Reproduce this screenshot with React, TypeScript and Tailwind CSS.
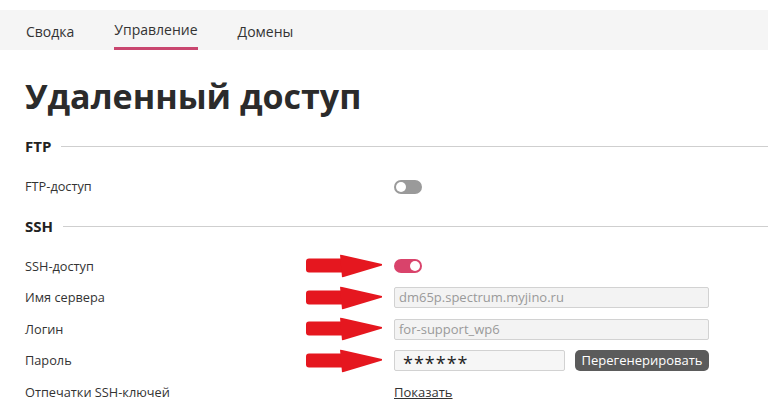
import React from "react"

const font = { fontFamily: '"Open Sans", "Noto Sans", sans-serif' }

function Arrow() {
  return (
    <svg width="76" height="23" viewBox="0 0 76 23" className="absolute left-[281px] top-1/2 -translate-y-1/2">
      <rect x="0" y="4" width="42" height="14" rx="3" fill="#e5171f" />
      <path d="M34 0 L76 9.5 L76 11 L36 23 Z" fill="#e5171f" />
    </svg>
  )
}

function Toggle({ on }: { on?: boolean }) {
  return (
    <div
      className={`w-[28px] h-[14px] rounded-full flex items-center px-[2px] ${
        on ? "bg-[#d9436b] justify-end" : "bg-[#9a9a9a] justify-start"
      }`}
    >
      <div className="w-[10px] h-[10px] rounded-full bg-white" />
    </div>
  )
}

function Row({ label, children, arrow }: { label: string; children: React.ReactNode; arrow?: boolean }) {
  return (
    <div className="relative flex items-center h-[31.5px]">
      <div className="w-[369px] shrink-0 text-[12.75px] text-[#333]">{label}</div>
      {arrow && <Arrow />}
      <div className="flex items-center">{children}</div>
    </div>
  )
}

function Section({ title }: { title: string }) {
  return (
    <div className="flex items-center gap-[10px] h-[20px]">
      <span className="text-[15px] font-bold text-[#222]">{title}</span>
      <div className="flex-1 h-px bg-[#cfcfcf]" />
    </div>
  )
}

export default function App() {
  return (
    <div className="w-full h-[419px] bg-white overflow-hidden pt-[10px]" style={font}>
      <nav className="h-[40px] bg-[#f5f5f5] flex pl-[26px] gap-[40px] text-[14px] text-[#333]">
        <div className="flex items-center pt-[2px]">Сводка</div>
        <div className="flex items-center pt-[2px] border-b-[3px] border-[#c9466f]">Управление</div>
        <div className="flex items-center pt-[2px]">Домены</div>
      </nav>

      <div className="pl-[25px]">
        <h1 className="mt-[26px] text-[34px] leading-[40px] font-bold text-[#2b2b2b]">Удаленный доступ</h1>

        <div className="mt-[20px]">
          <Section title="FTP" />
        </div>
        <div className="mt-[15px]">
          <Row label="FTP-доступ">
            <Toggle />
          </Row>
        </div>

        <div className="mt-[14px]">
          <Section title="SSH" />
        </div>
        <div className="mt-[14px]">
          <Row label="SSH-доступ" arrow>
            <Toggle on />
          </Row>
          <Row label="Имя сервера" arrow>
            <div className="w-[315px] h-[21px] border border-[#d2d2d2] rounded-[2px] bg-[#f3f3f3] px-[4px] flex items-center text-[13px] text-[#9a9a9a]">
              dm65p.spectrum.myjino.ru
            </div>
          </Row>
          <Row label="Логин" arrow>
            <div className="w-[315px] h-[21px] border border-[#d2d2d2] rounded-[2px] bg-[#f3f3f3] px-[4px] flex items-center text-[13px] text-[#9a9a9a]">
              for-support_wp6
            </div>
          </Row>
          <Row label="Пароль" arrow>
            <div className="w-[171px] h-[21px] border border-[#d2d2d2] rounded-[2px] bg-[#f6f6f6] px-[8px] flex items-center text-[18px] text-[#222] tracking-[1px] pt-[6px]">
              ******
            </div>
            <button className="ml-[10px] w-[134px] h-[21px] rounded-[5px] bg-[#5b5b5b] text-white text-[13px] flex items-center justify-center">
              Перегенерировать
            </button>
          </Row>
          <Row label="Отпечатки SSH-ключей">
            <span className="text-[13px] text-[#333] underline">Показать</span>
          </Row>
        </div>
      </div>
    </div>
  )
}
